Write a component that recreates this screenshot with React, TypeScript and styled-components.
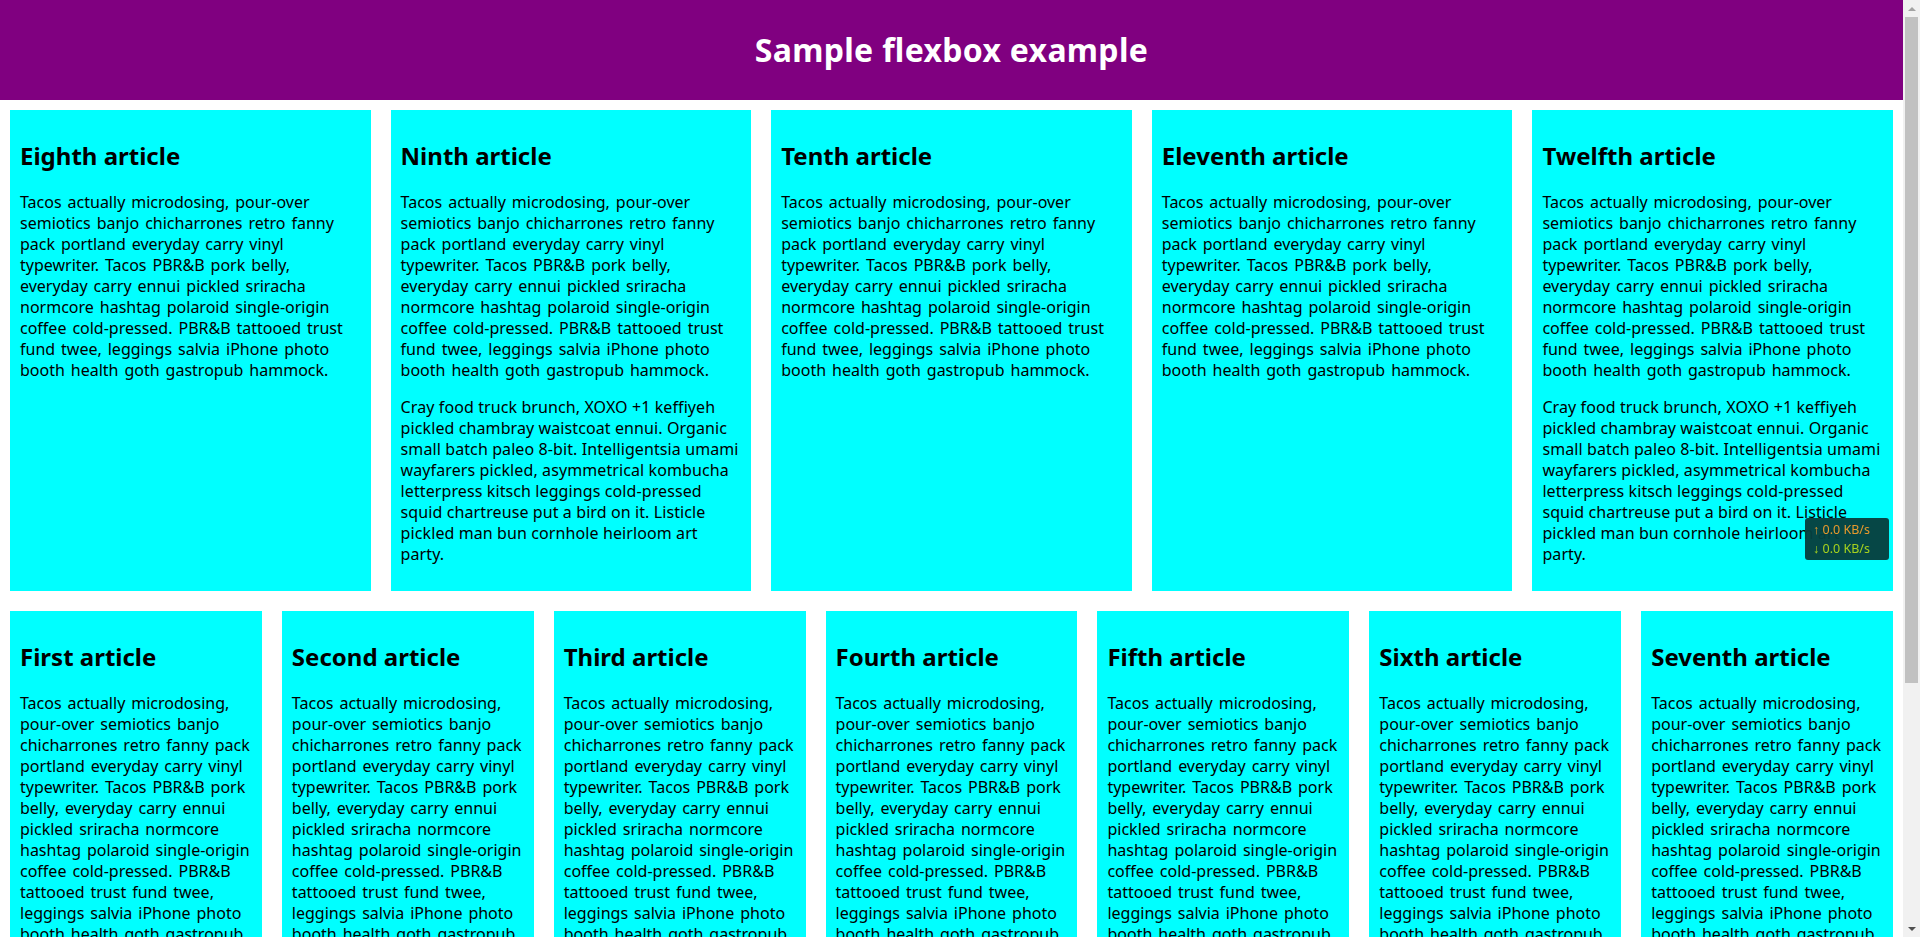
import styled, { createGlobalStyle } from 'styled-components';

const GlobalStyle = createGlobalStyle`
  html {
    font-family: "Noto Sans", "Open Sans", sans-serif;
  }

  body {
    margin: 0;
  }
`;

const Page = styled.div`
  display: flex;
  align-items: flex-start;
`;

const Content = styled.main`
  flex: 1;
  min-width: 0;
`;

const ScrollBar = styled.div`
  position: sticky;
  top: 0;
  flex: 0 0 17px;
  height: 100vh;
  display: flex;
  flex-direction: column;
  background: #f1f1f1;
`;

const ScrollArrow = styled.div<{ $down?: boolean }>`
  flex: 0 0 17px;
  display: flex;
  align-items: center;
  justify-content: center;

  &::before {
    content: '';
    border-left: 4px solid transparent;
    border-right: 4px solid transparent;
    ${(p) =>
      p.$down
        ? 'border-top: 4px solid #505050;'
        : 'border-bottom: 4px solid #a3a3a3;'}
  }
`;

const ScrollTrack = styled.div`
  flex: 1;
  padding: 0 2px;
`;

const ScrollThumb = styled.div`
  height: 666px;
  background: #c1c1c1;
`;

const Header = styled.header`
  background: purple;
  height: 100px;
`;

const Title = styled.h1`
  margin: 0;
  text-align: center;
  color: white;
  font-size: 32px;
  line-height: 100px;
  letter-spacing: 0.3px;
`;

const Section = styled.section`
  display: flex;
  flex-wrap: wrap-reverse;
`;

const Article = styled.article`
  flex: 1 200px;
  padding: 10px;
  margin: 10px;
  background: aqua;
`;

const Heading = styled.h2`
  font-size: 24px;
  line-height: 32px;
  margin: 0.83em 0;
`;

// spacing tuned per paragraph so the lines break where the original font breaks them
const Text = styled.p<{ $lead?: boolean }>`
  font-size: 16px;
  line-height: 21px;
  margin: 16px 0;
  ${(p) => (p.$lead ? 'word-spacing: 1.8px;' : 'letter-spacing: 0.1px;')}
`;

const SpeedMeter = styled.div`
  position: fixed;
  top: 518px;
  right: 31px;
  width: 84px;
  height: 42px;
  box-sizing: border-box;
  padding: 2px 0 0 8px;
  border-radius: 3px;
  background: rgba(6, 64, 62, 0.96);
  font-size: 12.5px;
  line-height: 19px;
`;

const Rate = styled.div<{ $up?: boolean }>`
  color: ${(p) => (p.$up ? '#e89a2c' : '#a6d21e')};
  white-space: nowrap;
`;

const tacos =
  'Tacos actually microdosing, pour-over semiotics banjo chicharrones retro fanny pack portland everyday carry vinyl typewriter. Tacos PBR&B pork belly, everyday carry ennui pickled sriracha normcore hashtag polaroid single-origin coffee cold-pressed. PBR&B tattooed trust fund twee, leggings salvia iPhone photo booth health goth gastropub hammock.';

const cray =
  'Cray food truck brunch, XOXO +1 keffiyeh pickled chambray waistcoat ennui. Organic small batch paleo 8-bit. Intelligentsia umami wayfarers pickled, asymmetrical kombucha letterpress kitsch leggings cold-pressed squid chartreuse put a bird on it. Listicle pickled man bun cornhole heirloom art party.';

const articles = [
  'First', 'Second', 'Third', 'Fourth', 'Fifth', 'Sixth',
  'Seventh', 'Eighth', 'Ninth', 'Tenth', 'Eleventh', 'Twelfth',
];

const App = () => {
  return (
    <>
      <GlobalStyle />
      <Page>
        <Content>
          <Header>
            <Title>Sample flexbox example</Title>
          </Header>
          <Section>
            {articles.map((name, i) => (
              <Article key={name}>
                <Heading>{name} article</Heading>
                <Text $lead>{tacos}</Text>
                {(i + 1) % 3 === 0 && <Text>{cray}</Text>}
              </Article>
            ))}
          </Section>
        </Content>
        <ScrollBar>
          <ScrollArrow />
          <ScrollTrack>
            <ScrollThumb />
          </ScrollTrack>
          <ScrollArrow $down />
        </ScrollBar>
      </Page>
      <SpeedMeter>
        <Rate $up>↑ 0.0 KB/s</Rate>
        <Rate>↓ 0.0 KB/s</Rate>
      </SpeedMeter>
    </>
  );
};

export default App;
